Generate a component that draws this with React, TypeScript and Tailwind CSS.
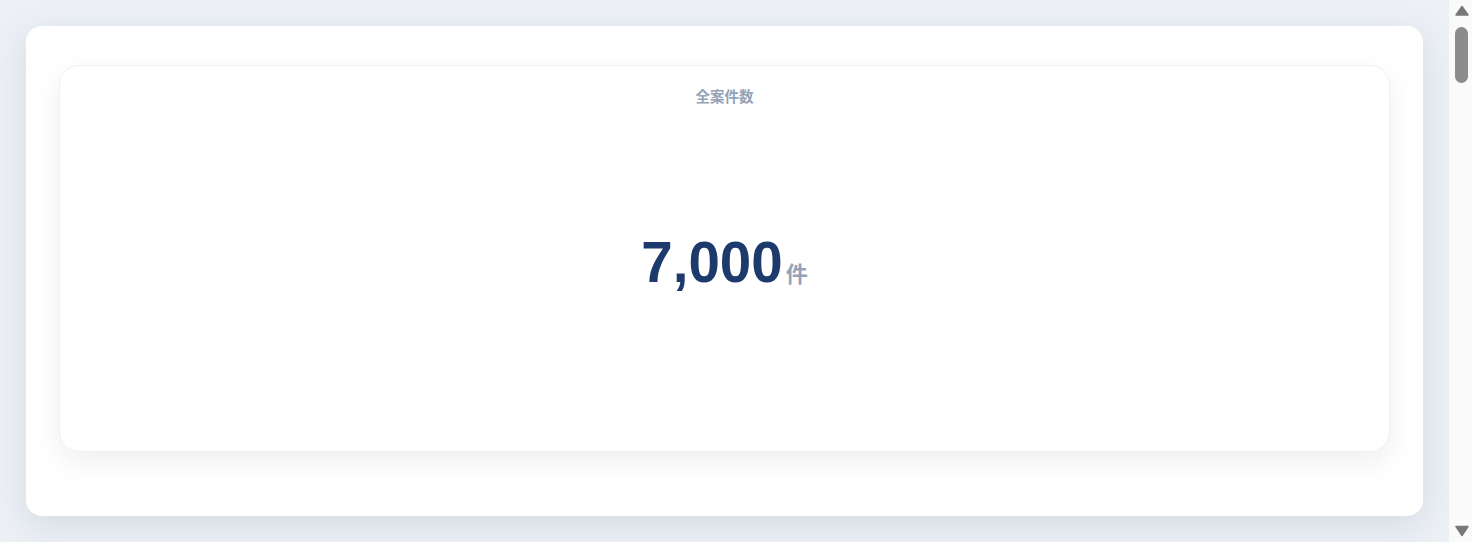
export default function App() {
  return (
    <div
      className="flex h-[542px] overflow-hidden bg-[#edf1f6]"
      style={{ fontFamily: '"Liberation Sans", "Noto Sans CJK JP", sans-serif' }}
    >
      <main className="min-w-0 flex-1 p-[26px]">
        <div className="rounded-2xl bg-white px-[33px] pt-[39px] pb-[64px] shadow-[0_10px_36px_rgba(100,116,139,0.18)]">
          <div className="flex h-[387px] flex-col items-center rounded-[20px] border border-[#eef0f4] bg-white pt-[21px] shadow-[0_10px_28px_rgba(15,23,42,0.07)]">
            <div className="text-[14.5px] font-bold leading-5 text-[#94a3b8]">全案件数</div>
            <div className="flex flex-1 items-center justify-center pb-[32px]">
              <div className="flex items-baseline">
                <span className="text-[56.5px] font-bold leading-none text-[#1c3a6c]">7,000</span>
                <span className="ml-[3px] text-[22px] font-bold leading-none text-[#94a3b8]">件</span>
              </div>
            </div>
          </div>
        </div>
      </main>
      <div className="flex w-[23px] shrink-0 flex-col items-center bg-[#fafafa] pt-[5px] pb-[5px]">
        <svg width="14" height="11" viewBox="0 0 14 11" className="ml-[2px]">
          <path d="M7 1.5 L13 10 L1 10 Z" fill="#787878" stroke="#787878" strokeWidth="1.5" strokeLinejoin="round" />
        </svg>
        <div className="mt-[11px] ml-[2px] h-[56px] w-[13px] rounded-full bg-[#8c8c8c]" />
        <div className="flex-1" />
        <svg width="14" height="12" viewBox="0 0 14 12" className="ml-[2px]">
          <path d="M1 1.5 L13 1.5 L7 10.5 Z" fill="#787878" stroke="#787878" strokeWidth="1.5" strokeLinejoin="round" />
        </svg>
      </div>
    </div>
  );
}
